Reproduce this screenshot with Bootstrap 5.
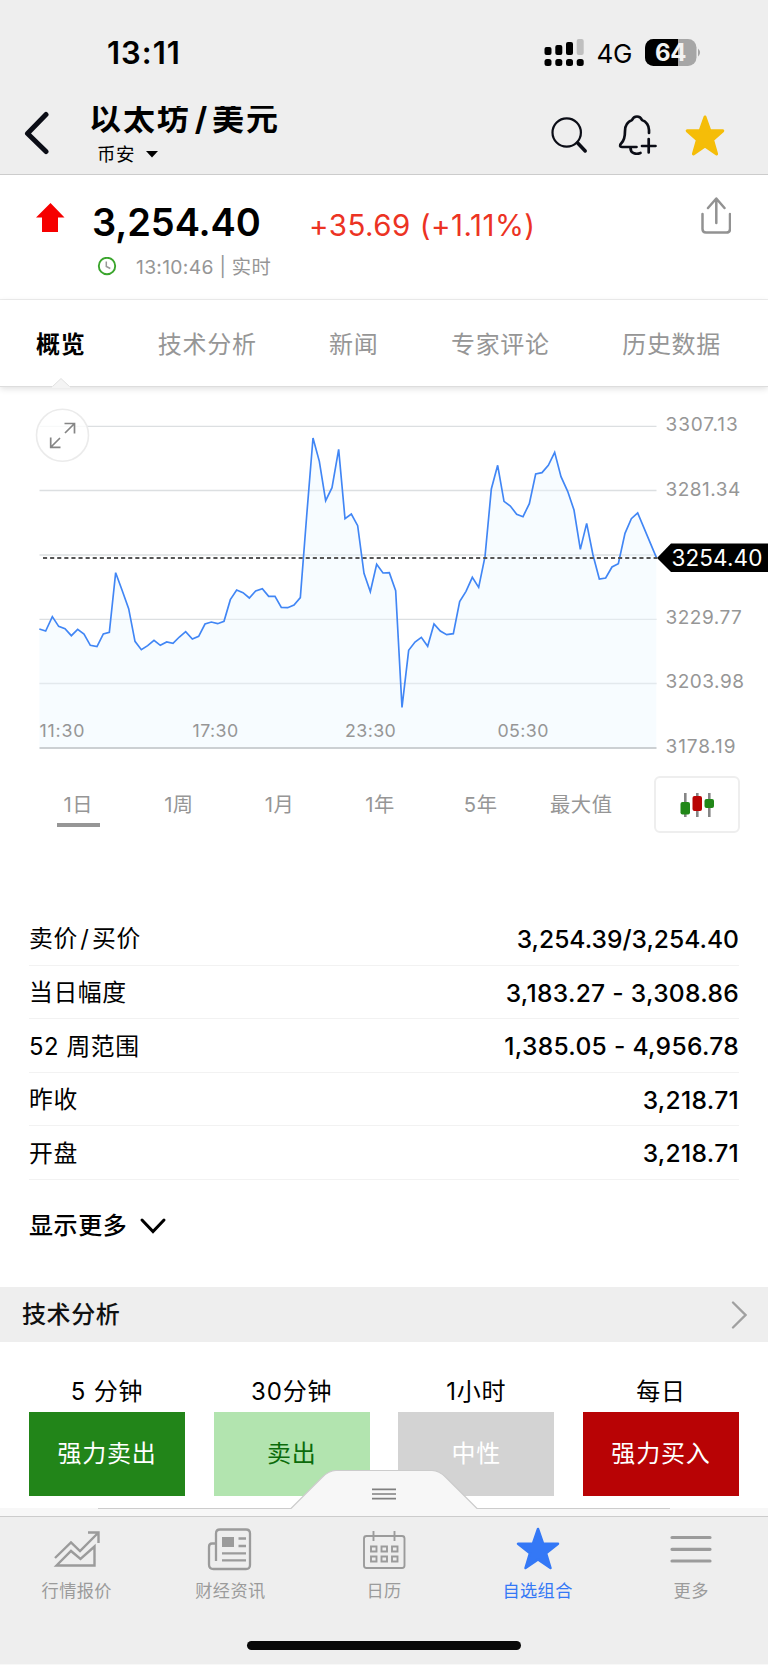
<!DOCTYPE html>
<html lang="zh-CN">
<head>
<meta charset="utf-8">
<meta name="viewport" content="width=device-width, initial-scale=1">
<title>以太坊/美元</title>
<link href="https://cdn.jsdelivr.net/npm/bootstrap@5.3.0/dist/css/bootstrap.min.css" rel="stylesheet">
<style>
body{font-family:Inter,"Noto Sans CJK SC",sans-serif;color:#000;background:#fff;height:1665px;overflow:hidden;line-height:1}
svg{display:block;flex:none}
.top-area{height:175px;background:#eee;border-bottom:1px solid #ccc}
.status-row{height:105px;padding:0 66px 0 107px}
.clock{font-size:31px;font-weight:600;letter-spacing:1px}
.net{font-size:26px;letter-spacing:-.3px;margin:2px 13px 0 12px}
.title-row{height:69px;padding:0 42px 0 24px}
.title-box{margin-left:39px;width:303px}
.title{font-size:32px;font-weight:700;letter-spacing:1.9px;height:32px;margin-top:1px;overflow:hidden}
.title span{display:block;margin-top:-3px}
.title i{font-style:normal;margin:0 3px 0 4px}
.exchange{font-size:18.5px;letter-spacing:.4px;margin:7px 0 0 8px}
.quote{height:125px;border-bottom:1px solid #eee;padding:21px 37px 0 36px}
.quote-main{height:54px}
.price{font-size:38px;font-weight:600;letter-spacing:-.1px;width:217px;margin:7px 0 0 27px}
.change{font-size:29.5px;color:#ec3323;letter-spacing:.5px;margin-top:15px}
.stamp{font-size:19.3px;letter-spacing:.3px;color:#969696;margin:8px 0 0 61px}
.stamp svg{margin-top:-2px}
.stamp span{margin-left:19px}
.page-tabs{height:87px;padding:4px 47px 0 36px;font-size:24px;letter-spacing:.7px;color:#969696;border-bottom:1px solid #ddd;box-shadow:0 2px 6px rgba(0,0,0,.12)}
.page-tabs b{font-weight:600;color:#000}
.notch{position:absolute;left:50px;bottom:-2px}
.ranges{height:57px;padding-left:28px;margin-top:16px;font-size:20.3px;color:#969696}
.ranges>span{width:100.6px;padding-top:1px;text-align:center;letter-spacing:.5px}
.ranges u{text-decoration:none;display:inline-block;position:relative}
.ranges .on::after{content:"";position:absolute;left:50%;margin-left:-21.5px;width:43px;height:4px;background:#969696;top:28px}
.candle-btn{width:86px;height:57px;border:2px solid #eee;border-radius:6px;background:#fff;margin-left:22px}
.facts{margin:79px 29px 0}
.facts>div{height:53.6px;border-bottom:1.4px solid #f2f2f2;font-size:23.8px;letter-spacing:.6px;padding-top:2px}
.facts i{font-style:normal;margin:0 2.5px}
.facts b{font-weight:500;font-size:24.6px;letter-spacing:.3px}
.facts>div:first-child b{letter-spacing:0}
.more{height:107px;padding:2px 29px 16px;font-size:24px;font-weight:500;letter-spacing:.6px}
.bar{height:55px;background:#eee;padding:1px 21px 0 22px;font-size:24px;letter-spacing:.6px;font-weight:500;color:#111}
.signals{padding:38px 29px 0;gap:28.5px;font-size:24px;letter-spacing:.8px}
.signals>div{flex:1 1 0;text-align:center}
.sig{height:84px;margin-top:8px;padding-top:1px;color:#fff}
.dock{height:195px}
.dock-strip{height:8px;background:#f7f7f7;margin-top:-1px}
.dock-tabs{height:149px;background:#eee;border-top:1px solid #ccc;border-bottom:1px solid #f8f8f8;color:#9b9b9b;font-size:17.2px;letter-spacing:.4px}
.dock-tabs .nav-item{flex:1 1 0;padding-top:8px}
.dock-tabs svg{margin-bottom:7px}
.home{left:247px;top:171px;width:274px;height:9px;border-radius:5px;background:#080808}
</style>
</head>
<body>
<header class="top-area">
  <div class="status-row d-flex align-items-center">
    <div class="clock me-auto">13:11</div>
    <svg width="40" height="28" viewBox="0 1 40 28"><g fill="#000"><rect x="0.5" y="9" width="7" height="8" rx="2"/><rect x="11.3" y="7" width="7" height="10" rx="2"/><rect x="22" y="4" width="7" height="13" rx="2"/><rect x="32.700" y="1" width="7" height="16" rx="2" fill="#bfbfbf"/><rect x="0.5" y="21" width="7" height="7" rx="2.500"/><rect x="11.3" y="21" width="7" height="7" rx="2.500"/><rect x="22" y="21" width="7" height="7" rx="2.500"/><rect x="32.700" y="21" width="7" height="7" rx="2.500"/></g></svg>
    <div class="net">4G</div>
    <svg width="57" height="28" viewBox="0 0 57 28"><defs><clipPath id="bat"><rect width="51.500" height="27" rx="8.500"/></clipPath></defs><g clip-path="url(#bat)"><rect width="52" height="28" fill="#a6a6a6"/><rect width="33" height="28"/></g><path d="M53 9.500q4 4 0 8z" fill="#a6a6a6"/><text x="25.500" y="22" text-anchor="middle" font-family="Inter" font-weight="700" font-size="24" letter-spacing="-.5" fill="#f2f2f2">64</text></svg>
  </div>
  <div class="title-row d-flex">
    <svg width="26" height="60" viewBox="0 0 26 60"><path d="M22 9.500 3.500 28.500 22 46.500" fill="none" stroke="#0b0d16" stroke-width="5" stroke-linecap="round" stroke-linejoin="round"/></svg>
    <div class="title-box me-auto">
      <div class="title"><span>以太坊<i>/</i>美元</span></div>
      <div class="exchange d-flex align-items-center">币安<svg class="ms-2" width="18" height="10" viewBox="0 0 18 10"><path d="M3 2h12L9 8.500z"/></svg></div>
    </div>
    <svg width="176" height="60" viewBox="0 0 176 60" fill="none" stroke="#0b0d16" stroke-width="2.200" stroke-linecap="round" stroke-linejoin="round">
      <circle cx="16.700" cy="27.500" r="14.200"/><path d="m27.700 38 7.500 8" stroke-width="3.500"/>
      <path d="M99 28V25c0-4-2.500-8.500-7-10q-1.500-3.500-5-3.500t-5 3.500c-5 2-7 6-7 11 0 6-.5 9-3.500 12-2.500 2.500-1.500 4 .5 4h14.500M80.500 43c0 6 6 6.500 10 5M92 41h13.500M98.700 34v13.500" stroke-width="2.700"/>
      <path d="m155 12 4.800 13.500 13 .3-10.200 9.200 4 14L155 41l-11.600 8 4-14-10.200-9.200 13-.3z" fill="#f5bd08" stroke="#f5bd08" stroke-width="3"/>
    </svg>
  </div>
</header>
<section class="quote">
  <div class="quote-main d-flex">
    <svg width="29" height="40" viewBox="0 0 29 40"><path d="M14.500 7 28.500 21.500H22V36H6V21.500H0z" fill="#f60000"/></svg>
    <div class="price">3,254.40</div>
    <div class="change me-auto">+35.69 (+1.11%)</div>
    <svg width="30" height="42" viewBox="0 0 30 42" fill="none" stroke="#929292" stroke-width="2.500" stroke-linecap="round" stroke-linejoin="round"><path d="M1.500 18v15q0 3.500 3.500 3.500h20.500q3.500 0 3.500-3.500V18M15.300 27V3M7 12l8.300-9.500L23.500 12"/></svg>
  </div>
  <div class="stamp d-flex align-items-center"><svg width="20" height="20" viewBox="0 0 20 20" fill="none"><circle cx="10" cy="9" r="8.200" stroke="#3aa52c" stroke-width="1.900"/><path d="M9.300 4.500v5l4 2" stroke="#999" stroke-width="1.500"/></svg><span>13:10:46 | 实时</span></div>
</section>
<nav class="page-tabs d-flex align-items-center justify-content-between position-relative">
  <b>概览</b><span>技术分析</span><span>新闻</span><span>专家评论</span><span>历史数据</span>
  <svg class="notch" width="22" height="11" viewBox="0 0 22 11"><path d="M2 11v-1.500l9-8 9 8V11z" fill="#f4f4f4"/><path d="m2.500 9.500 8.500-8 8.500 8" fill="none" stroke="#e2e2e2"/></svg>
</nav>
<svg width="768" height="373" viewBox="0 -3 768 373" font-family="Inter" fill="#969696">
  <g stroke="#dcdfe1" stroke-width="1.300"><path d="M39.500 36.300h617M39.500 100.500h617M39.500 165h617M39.500 229.300h617M39.500 293.500h617"/></g>
  <g transform="scale(.333333)" fill="none">
    <path fill="#edf7ff" fill-opacity=".42" d="M118 1073V717L137 723 157 680 176 709 195 716 214 737 233 718 252 732 271 766 291 770 310 732 328 727 347 548 366 600 386 656 405 754 424 779 443 767 462 751 481 766 500 756 519 760 538 741 557 725 577 747 596 739 615 702 634 696 653 701 672 694 691 629 710 600 729 608 748 624 767 603 787 596 806 619 825 619 844 652 863 653 882 645 901 623 920 378 939 144 958 214 977 332 996 293 1016 178 1035 386 1054 372 1073 407 1092 550 1111 605 1130 523 1149 549 1168 548 1187 602 1206 952 1226 781 1245 756 1264 742 1283 769 1302 702 1321 723 1340 734 1360 731 1379 635 1398 604 1417 562 1436 592 1455 500 1474 297 1493 226 1512 334 1531 348 1550 373 1569 380 1588 341 1607 252 1626 248 1645 226 1664 187 1683 260 1703 304 1722 360 1741 478 1760 400 1779 495 1798 567 1817 564 1836 531 1855 521 1875 430 1894 386 1913 369 1969 502V1073z"/>
    <path stroke="#4186f5" stroke-width="5" d="M118 717 137 723 157 680 176 709 195 716 214 737 233 718 252 732 271 766 291 770 310 732 328 727 347 548 366 600 386 656 405 754 424 779 443 767 462 751 481 766 500 756 519 760 538 741 557 725 577 747 596 739 615 702 634 696 653 701 672 694 691 629 710 600 729 608 748 624 767 603 787 596 806 619 825 619 844 652 863 653 882 645 901 623 920 378 939 144 958 214 977 332 996 293 1016 178 1035 386 1054 372 1073 407 1092 550 1111 605 1130 523 1149 549 1168 548 1187 602 1206 952 1226 781 1245 756 1264 742 1283 769 1302 702 1321 723 1340 734 1360 731 1379 635 1398 604 1417 562 1436 592 1455 500 1474 297 1493 226 1512 334 1531 348 1550 373 1569 380 1588 341 1607 252 1626 248 1645 226 1664 187 1683 260 1703 304 1722 360 1741 478 1760 400 1779 495 1798 567 1817 564 1836 531 1855 521 1875 430 1894 386 1913 369 1969 502"/>
  </g>
  <path d="M39.500 358h617" stroke="#ccd0d3" stroke-width="2"/>
  <path d="M43 168h614" stroke="#555" stroke-width="1.800" stroke-dasharray="4.100 3"/>
  <circle cx="62.500" cy="45.300" r="26" fill="#fff" fill-opacity=".8" stroke="#ebebeb" stroke-width="1.600"/>
  <path d="M65 43 74.500 33.500M64.500 33.500H74.500V43.500M60 48 50.500 57.500M50.700 47.500V57.300H60.500" fill="none" stroke="#858585" stroke-width="1.700"/>
  <g font-size="19" letter-spacing=".5"><text x="665.500" y="41.300" letter-spacing=".9">3307.13</text><text x="665.500" y="105.600">3281.34</text><text x="665.500" y="234.100">3229.77</text><text x="665.500" y="298.300">3203.98</text><text x="665.500" y="362.600" letter-spacing=".9">3178.19</text></g>
  <g font-size="17.800" letter-spacing=".4"><text x="39.500" y="347" letter-spacing=".8">11:30</text><text x="192.500" y="347">17:30</text><text x="345" y="347">23:30</text><text x="497.500" y="347">05:30</text></g>
  <path d="M657 168 671 153.500H768V182H671z" fill="#000"/>
  <text x="671.500" y="176" font-size="22.500" letter-spacing=".1" fill="#fff">3254.40</text>
</svg>
<div class="ranges d-flex align-items-center">
  <span><u class="on">1日</u></span><span>1周</span><span>1月</span><span>1年</span><span>5年</span><span>最大值</span>
  <button class="candle-btn p-0 d-flex align-items-center justify-content-center"><svg width="36" height="26" viewBox="0 0 36 26"><path d="M6.300 1v24M18.300 1v24M30.300 1v24" stroke="#858585" stroke-width="2.600"/><rect x="1.500" y="10" width="9.500" height="12.500" rx="2" fill="#218718"/><rect x="13.500" y="4" width="9.500" height="15" rx="2" fill="#b90404"/><rect x="25.500" y="7" width="9.500" height="9" rx="2" fill="#218718"/></svg></button>
</div>
<section class="facts">
  <div class="d-flex align-items-center justify-content-between"><span>卖价<i>/</i>买价</span><b>3,254.39/3,254.40</b></div>
  <div class="d-flex align-items-center justify-content-between">当日幅度<b>3,183.27 - 3,308.86</b></div>
  <div class="d-flex align-items-center justify-content-between">52 周范围<b>1,385.05 - 4,956.78</b></div>
  <div class="d-flex align-items-center justify-content-between">昨收<b>3,218.71</b></div>
  <div class="d-flex align-items-center justify-content-between">开盘<b>3,218.71</b></div>
</section>
<div class="more d-flex align-items-center">显示更多<svg class="ms-2" width="32" height="18" viewBox="-4 0 32 18"><path d="m3 3 11 11.500L25 3" fill="none" stroke="#000" stroke-width="3" stroke-linecap="round"/></svg></div>
<div class="bar d-flex align-items-center justify-content-between">技术分析<svg width="17" height="30" viewBox="0 0 17 30"><path d="m3 2.500 12.500 12.500L3 27.500" fill="none" stroke="#a0a0a0" stroke-width="2.300" stroke-linecap="round"/></svg></div>
<section class="signals d-flex">
  <div>5 分钟<div class="sig d-flex align-items-center justify-content-center" style="background:#228519">强力卖出</div></div>
  <div>30分钟<div class="sig d-flex align-items-center justify-content-center" style="background:#b2e4af;color:#0b6b0b">卖出</div></div>
  <div>1小时<div class="sig d-flex align-items-center justify-content-center" style="background:#d3d3d3">中性</div></div>
  <div>每日<div class="sig d-flex align-items-center justify-content-center" style="background:#b80305">强力买入</div></div>
</section>
<footer class="dock fixed-bottom">
  <svg width="768" height="39" viewBox="0 0 768 39"><path d="M98 38.500H291L322 7.500Q329 .5 336 .5H432Q439 .5 446 7.500L477 38.500H670" fill="#f7f7f7" stroke="#ccc" stroke-width="1.200"/><path d="M372 19.300h24M372 24h24M372 28.700h24" stroke="#808080" stroke-width="1.700"/></svg>
  <div class="dock-strip"></div>
  <nav class="dock-tabs nav flex-nowrap">
    <div class="nav-item d-flex flex-column align-items-center"><svg width="50" height="50" viewBox="0 0 50 50" fill="none" stroke="#9b9b9b" stroke-width="2.400"><path d="M3 33 19 17.500 28 26 45.500 8.500M36 7.500H46.500V18M4.500 40.500 19 26 28.500 34 42.500 21.500V40.500z"/></svg>行情报价</div>
    <div class="nav-item d-flex flex-column align-items-center"><svg width="50" height="50" viewBox="0 0 50 50" fill="none" stroke="#9b9b9b" stroke-width="2.300"><path d="M11 36V8.500q0-4 4-4H41q4 0 4 4V40q0 4-4 4H8.500Q4 44 4 39.500V22q0-3.500 3-3.500H11M33.500 13.500H41M33.500 21H41M17 28.300H41M17 35.300H41"/><path d="M17 12H29V22H17z" fill="#9b9b9b" stroke="none"/></svg>财经资讯</div>
    <div class="nav-item d-flex flex-column align-items-center"><svg width="50" height="50" viewBox="0 0 50 50" fill="none" stroke="#9b9b9b" stroke-width="1.900"><rect x="5" y="11" width="40.500" height="32" rx="2.500"/><path d="M14.500 6v10M35.500 6v10M12 21.500h5.500v5H12zM22.500 21.500H28v5H22.500zM33 21.500h5.500v5H33zM12 31.500h5.500v5H12zM22.500 31.500H28v5H22.500zM33 31.500h5.500v5H33z"/></svg>日历</div>
    <div class="nav-item d-flex flex-column align-items-center" style="color:#3478f6"><svg width="50" height="50" viewBox="0 0 50 50"><path d="m25 4 5 14.500 15 .2-12 9.500L37.500 43 25 34.500 12.500 43 17 28.200 5 18.700l15-.2z" fill="#3478f6" stroke="#3478f6" stroke-width="2.500" stroke-linejoin="round"/></svg>自选组合</div>
    <div class="nav-item d-flex flex-column align-items-center"><svg width="50" height="50" viewBox="0 0 50 50" stroke="#9b9b9b" stroke-width="3.200" stroke-linecap="round"><path d="M6 12.500h38M6 24.300h38M6 36h38"/></svg>更多</div>
  </nav>
  <div class="home position-absolute"></div>
</footer>
<script src="https://cdn.jsdelivr.net/npm/bootstrap@5.3.0/dist/js/bootstrap.bundle.min.js"></script>
</body>
</html>
